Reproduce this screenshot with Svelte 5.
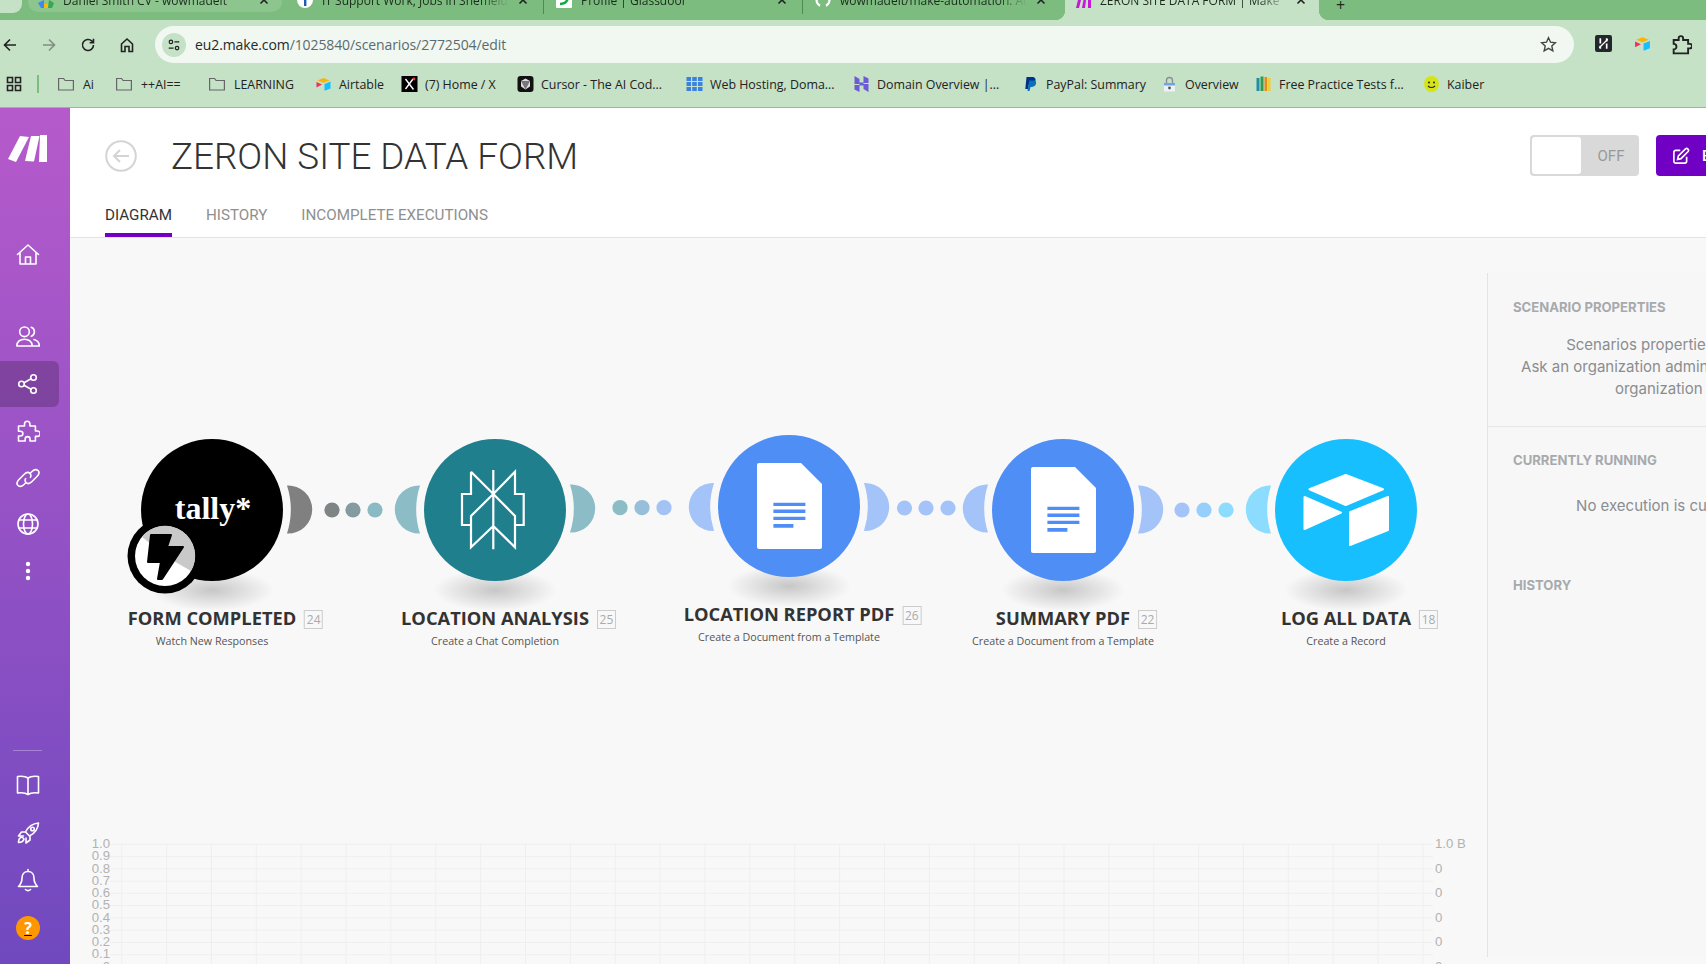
<script>
  const tabs = [
    { title: 'Daniel Smith CV - wowmadeit', icon: 'drive', kind: 'hover' },
    { title: 'IT Support Work, Jobs in Sheffield', icon: 'info', kind: 'sep' },
    { title: 'Profile | Glassdoor', icon: 'glass', kind: 'sep' },
    { title: 'wowmadeit/make-automation: Automa', icon: 'git', kind: '' },
    { title: 'ZERON SITE DATA FORM | Make', icon: 'make', kind: 'active' }
  ];
  const bookmarks = [
    { label: 'Ai', icon: 'folder', w: 58 },
    { label: '++AI==', icon: 'folder', w: 93 },
    { label: 'LEARNING', icon: 'folder', w: 107 },
    { label: 'Airtable', icon: 'airtable', w: 86 },
    { label: '(7) Home / X', icon: 'x', w: 116 },
    { label: 'Cursor - The AI Cod...', icon: 'cursor', w: 169 },
    { label: 'Web Hosting, Doma...', icon: 'grid', w: 167 },
    { label: 'Domain Overview |...', icon: 'hostinger', w: 169 },
    { label: 'PayPal: Summary', icon: 'paypal', w: 139 },
    { label: 'Overview', icon: 'lock', w: 94 },
    { label: 'Free Practice Tests f...', icon: 'books', w: 168 },
    { label: 'Kaiber', icon: 'kaiber', w: 70 }
  ];
  const nodes = [
    { name: 'FORM COMPLETED', sub: 'Watch New Responses', count: 24, cx: 212, cy: 510, color: '#000000', icon: 'tally' },
    { name: 'LOCATION ANALYSIS', sub: 'Create a Chat Completion', count: 25, cx: 495, cy: 510, color: '#207f8d', icon: 'perplexity' },
    { name: 'LOCATION REPORT PDF', sub: 'Create a Document from a Template', count: 26, cx: 789, cy: 506, color: '#4f8ef5', icon: 'doc' },
    { name: 'SUMMARY PDF', sub: 'Create a Document from a Template', count: 22, cx: 1063, cy: 510, color: '#4f8ef5', icon: 'doc' },
    { name: 'LOG ALL DATA', sub: 'Create a Record', count: 18, cx: 1346, cy: 510, color: '#18bfff', icon: 'airtable' }
  ];
  const moons = [
    { cx: 212, cy: 509.5, dir: 1, color: '#808080' },
    { cx: 495, cy: 509.5, dir: -1, color: '#8cbdc6' },
    { cx: 495, cy: 508.5, dir: 1, color: '#8cbdc6' },
    { cx: 789, cy: 507, dir: -1, color: '#a4c4f9' },
    { cx: 789, cy: 507, dir: 1, color: '#a4c4f9' },
    { cx: 1063, cy: 508.5, dir: -1, color: '#a4c4f9' },
    { cx: 1063, cy: 509.5, dir: 1, color: '#a4c4f9' },
    { cx: 1346, cy: 509.5, dir: -1, color: '#8bdcff' }
  ];
  const dots = [
    [332, 510, '#7f8485'], [353, 510, '#849ba0'], [375, 510, '#8abbc4'],
    [620, 507.7, '#8cbdc6'], [642, 507.7, '#98bfd9'], [664, 507.7, '#a2c3f4'],
    [904.5, 508, '#a4c4f9'], [926, 508, '#a4c4f9'], [948, 508, '#a4c4f9'],
    [1182, 510, '#a4c4f9'], [1204, 510, '#97cffc'], [1226, 510, '#8bdcff']
  ];
  function moonPath(m) {
    const x = m.cx + m.dir * 75;
    const s = m.dir > 0 ? 1 : 0;
    const i = m.dir > 0 ? 0 : 1;
    return `M${x} ${m.cy - 24}A24.03 24.03 0 1 ${s} ${x} ${m.cy + 24}A79 79 0 0 ${i} ${x} ${m.cy - 24}Z`;
  }
  const hLines = Array.from({ length: 11 }, (_, i) => 844.3 + i * 12.27);
  const vLines = Array.from({ length: 30 }, (_, i) => 121.7 + i * 44.87);
  const leftLabels = ['1.0', '0.9', '0.8', '0.7', '0.6', '0.5', '0.4', '0.3', '0.2', '0.1', '0'];
  const rightLabels = ['1.0 B', '0', '0', '0', '0', '0'];
</script>

<div class="app">
  <header class="chrome">
    <div class="tabstrip">
      <div class="stub"></div>
      {#each tabs as t}
        <div class="tab {t.kind}">
          <div class="tabrow">
            <svg class="fav" viewBox="0 0 16 16">
              {#if t.icon === 'drive'}
                <path d="M0 11l3 5h3V8z" fill="#4285f4" /><path d="M6 12h4v4H6z" fill="#fbbc05" /><path d="M11 8l5 3-2 5h-4z" fill="#34a853" />
              {:else if t.icon === 'info'}
                <circle cx="8" cy="8" r="8" fill="#fff" /><path d="M7 3h2.4v11H7z" fill="#1b5fb4" />
              {:else if t.icon === 'glass'}
                <rect width="16" height="16" rx="1" fill="#fff" /><path d="M4 12c4 0 7-2 8-6" stroke="#0caa41" stroke-width="2.4" fill="none" />
              {:else if t.icon === 'git'}
                <circle cx="8" cy="8" r="6.5" fill="none" stroke="#fff" stroke-width="2.2" /><path d="M5 13l6 0 0 3-6 0z" fill="#7cbc7f" />
              {:else}
                <path d="M1 16L5 0h3L4 16zM7 16L10 0h2L10 16zM13 0h3v16h-3z" fill="#c516d9" />
              {/if}
            </svg>
            <span class="tabtitle">{t.title}</span>
            <svg class="close" viewBox="0 0 10 10"><path d="M1.5 1.5l7 7M8.5 1.5l-7 7" /></svg>
          </div>
        </div>
      {/each}
      <span class="plus">+</span>
    </div>

    <div class="toolbar">
      <button class="tb" aria-label="Back"><svg viewBox="0 0 16 16"><path d="M14 8H2.5M8 2.5L2.5 8 8 13.5" /></svg></button>
      <button class="tb dim" aria-label="Forward"><svg viewBox="0 0 16 16"><path d="M2 8h11.5M8 2.5L13.5 8 8 13.5" /></svg></button>
      <button class="tb" aria-label="Reload"><svg viewBox="0 0 16 16"><path d="M13.5 8a5.5 5.5 0 1 1-1.6-3.9L13.5 5.7M13.5 1.8v3.9H9.6" /></svg></button>
      <button class="tb" aria-label="Home"><svg viewBox="0 0 16 16"><path d="M2.5 14.5V7L8 2l5.5 5v7.5H10V9.5H6v5z" /></svg></button>
      <div class="omnibox">
        <span class="info"><svg viewBox="0 0 16 16"><circle cx="4.5" cy="4.5" r="2" /><path d="M8.5 4.5h5.5M2 11.5h5.5" /><circle cx="11.5" cy="11.5" r="2" /></svg></span>
        <span class="url"><b>eu2.make.com</b>/1025840/scenarios/2772504/edit</span>
        <svg class="star" viewBox="0 0 16 16"><path d="M8 1.6l1.9 4.2 4.6.5-3.4 3.1 1 4.5L8 11.6l-4.1 2.3 1-4.5L1.5 6.3l4.6-.5z" /></svg>
      </div>
      <div class="exts">
        <span class="ext"><svg viewBox="0 0 16 16"><rect x="0" width="16" height="16" rx="2" fill="#23262b" /><path d="M5 3v5M11 3v3M11 8v5M5 10v3" stroke="#fff" stroke-width="1.6" /><path d="M4 12L12 4" stroke="#fff" stroke-width="1.2" /></svg></span>
        <span class="ext"><svg viewBox="0 0 16 16"><path d="M8 2l6 2.4-6 2.4-6-2.4z" fill="#fcb400" /><path d="M9 8l6-2.4v6.8L9 14.8z" fill="#18bfff" /><path d="M1 6l5.5 2.6L1 11.6z" fill="#f82b60" /></svg></span>
        <span class="ext wide"><svg viewBox="0 0 18 18"><path d="M1.500 4.500h4.500V3a2 2 0 0 1 4 0v1.500h4.500V8H16a2 2 0 0 1 0 4h-1.500v4.500h-13V13a2 2 0 0 0 0-5z" fill="none" stroke="#222" stroke-width="1.700" /></svg></span>
      </div>
    </div>

    <div class="bookmarks">
      <svg class="apps" viewBox="0 0 16 16"><path d="M1.5 1.5h5v5h-5zM9.5 1.5h5v5h-5zM1.5 9.5h5v5h-5zM9.5 9.5h5v5h-5z" /></svg>
      <span class="bsep"></span>
      {#each bookmarks as b}
        <div class="bm" class:isfolder={b.icon === 'folder'} style="width:{b.w}px">
          <svg class="bicon" viewBox="0 0 16 16">
            {#if b.icon === 'folder'}
              <path d="M0.600 2.500h5l1.500 2H15.400v9.500H0.600z" fill="none" stroke="#666" stroke-width="1.200" />
            {:else if b.icon === 'airtable'}
              <path d="M8 2l6 2.4-6 2.4-6-2.4z" fill="#fcb400" /><path d="M9 8l6-2.4v6.8L9 14.8z" fill="#18bfff" /><path d="M1 6l5.5 2.6L1 11.6z" fill="#f82b60" />
            {:else if b.icon === 'x'}
              <rect width="16" height="16" fill="#000" /><path d="M4 3l8 10.5M11.5 3L4 13" stroke="#fff" stroke-width="1.4" /><circle cx="12.5" cy="3" r="1.4" fill="#e33" />
            {:else if b.icon === 'cursor'}
              <rect width="16" height="16" rx="3" fill="#111" /><path d="M3.5 5L8 2.5 12.5 5v5.5L8 13.5 3.5 10.5z" fill="#ddd" /><path d="M3.5 5L12.5 5 8 13.5z" fill="#777" />
            {:else if b.icon === 'grid'}
              <path d="M0 1h4.5v4H0zM5.7 1h4.6v4H5.7zM11.5 1H16v4h-4.5zM0 6h4.5v4H0zM5.7 6h4.6v4H5.7zM11.5 6H16v4h-4.5zM0 11h4.5v4H0zM5.7 11h4.6v4H5.7zM11.5 11H16v4h-4.5z" fill="#3b82e0" />
            {:else if b.icon === 'hostinger'}
              <path d="M1 0l5 3v5H1zM10 8h5v8l-5-3zM10 0l5 2.5V7h-5zM1 9h5v7l-5-2.5zM6 6.5h4v3H6z" fill="#6d5ad6" />
            {:else if b.icon === 'paypal'}
              <path d="M4 1h5.5c3 0 4 2 3.4 4-.6 2.4-2.6 3.4-5 3.4H6.4L5.5 13H2.8z" fill="#003087" /><path d="M6.8 4.5h5.5c1.5 1 1.6 2.4 1 3.8-.7 2-2.4 2.7-4.4 2.7H8L7 15H5z" fill="#0a70ba" />
            {:else if b.icon === 'lock'}
              <path d="M5 7V4.5a3 3 0 0 1 6 0V7" fill="none" stroke="#8a8f96" stroke-width="1.4" /><rect x="2.5" y="7" width="11" height="8.5" fill="#eef2f6" /><path d="M2.5 7h11v2.5h-11z" fill="#6ea5e8" /><circle cx="8" cy="12" r="1.4" fill="#555" />
            {:else if b.icon === 'books'}
              <path d="M1 2h3v13H1z" fill="#1f8fa8" /><path d="M5 0.500h3V15H5z" fill="#2e9d54" /><path d="M9 1h2.500v14H9z" fill="#e58a1f" /><path d="M12 2h3v13h-3z" fill="#efcf2e" />
            {:else}
              <ellipse cx="8" cy="8" rx="7.500" ry="8" fill="#d6e416" /><circle cx="5.500" cy="6.500" r="1" fill="#222" /><circle cx="10.500" cy="6.500" r="1" fill="#222" /><path d="M4.500 10c2 2 5 2 7 0" fill="none" stroke="#222" stroke-width="1.2" />
            {/if}
          </svg>
          <span>{b.label}</span>
        </div>
      {/each}
    </div>
  </header>

  <div class="body">
    <aside class="sidebar">
      <div class="logo">
        <svg viewBox="0 0 70 50"><path d="M20 9l9 1-13 25-8-3zM31 9h8.500L34 34.500 25 34zM40 8h7v27h-8z" fill="#fff" /></svg>
      </div>
      <nav class="nav">
        <a class="item home" href="#a" aria-label="Home"><svg viewBox="0 0 24 24"><path d="M1.500 11.500L12 2l10.500 9.500M4 9.500V21h16V9.500M9.500 21v-7h5v7" /></svg></a>
        <a class="item" href="#a" aria-label="Team"><svg viewBox="0 0 24 24"><circle cx="8.500" cy="6.800" r="4.800" /><path d="M.800 21c0-4.300 3.500-6.800 7.700-6.800s7.700 2.500 7.700 6.800zM15.300 2.300a4.800 4.800 0 0 1 0 9M18 14.500c3 .8 5.300 2.800 5.300 6.500h-7" /></svg></a>
        <a class="item active" href="#a" aria-label="Scenarios"><svg viewBox="0 0 24 24"><circle cx="5.500" cy="12" r="2.800" /><circle cx="17.500" cy="5.500" r="2.800" /><circle cx="17.500" cy="18.500" r="2.800" /><path d="M8 10.700l7-4M8 13.300l7 4" /></svg></a>
        <a class="item" href="#a" aria-label="Apps"><svg viewBox="0 0 24 24"><path d="M2.500 7h6V5a2.700 2.700 0 0 1 5.400 0v2h5.500v5h2a2.700 2.700 0 0 1 0 5.400h-2V22H14v-2a2.400 2.400 0 0 0-4.800 0v2H2.500v-5h2a2.400 2.400 0 0 0 0-4.800h-2z" /></svg></a>
        <a class="item" href="#a" aria-label="Connections"><svg viewBox="0 0 24 24"><path d="M10 16.500l-2 2c-2 2-4.500 2.300-6 1-1.500-1.500-1-4 1-6l5-5c2-2 4.500-2.500 6-1 1 1 1.200 2.400.4 3.800" /><path d="M14 7.500l2-2c2-2 4.500-2.300 6-1 1.500 1.500 1 4-1 6l-5 5c-2 2-4.500 2.500-6 1-1-1-1.200-2.400-.4-3.800" /></svg></a>
        <a class="item" href="#a" aria-label="Web"><svg viewBox="0 0 24 24"><circle cx="12" cy="12" r="10" /><ellipse cx="12" cy="12" rx="4.500" ry="10" /><path d="M3 8h18M3 16h18" /></svg></a>
        <a class="item" href="#a" aria-label="More"><svg viewBox="0 0 24 24"><circle class="solid" cx="12" cy="5" r="2.200" /><circle class="solid" cx="12" cy="12" r="2.200" /><circle class="solid" cx="12" cy="19" r="2.200" /></svg></a>
      </nav>
      <div class="bottom">
        <span class="rule"></span>
        <a class="item" href="#a" aria-label="Docs"><svg viewBox="0 0 24 24"><path d="M12 5c-2-1.500-6-2-10.500-1.500V20c4.500-.5 8.500 0 10.500 1.500 2-1.500 6-2 10.500-1.500V3.500C18 3 14 3.500 12 5zM12 5v16.500" /></svg></a>
        <a class="item" href="#a" aria-label="News"><svg viewBox="0 0 24 24"><path d="M22.500 2c-6 .5-10 3-13 9l4 4c6-3 8.500-7 9-13zM9.500 11H5.500L2.500 15h5M14 15v4l-4 3v-5" /><circle cx="16.500" cy="8" r="1.800" /><path d="M6 16c-2 .5-3.500 2-3.500 5.500C6 21.500 7.500 20 8 18z" /></svg></a>
        <a class="item" href="#a" aria-label="Notifications"><svg viewBox="0 0 24 24"><path d="M12 3.500c-4 0-6 3-6 6.500 0 5-1.500 6.500-3.500 8.500h19C19.500 16.500 18 15 18 10c0-3.500-2-6.500-6-6.500zM12 1.500v2M9.500 21.500c1.500 1.300 3.500 1.300 5 0" /></svg></a>
        <a class="item" href="#a" aria-label="Help"><span class="help">?</span></a>
      </div>
    </aside>

    <main class="main">
      <section class="head">
        <div class="headrow">
          <svg class="backc" viewBox="0 0 32 32"><circle cx="16" cy="16" r="14.800" /><path d="M24 16H9M15 10l-6 6 6 6" /></svg>
          <h1>ZERON SITE DATA FORM</h1>
          <div class="actions">
            <div class="toggle"><span class="knob"></span><span class="off">OFF</span></div>
            <button class="edit"><svg viewBox="0 0 24 24"><path d="M11 4.500H5a2.500 2.500 0 0 0-2.500 2.500v12A2.500 2.500 0 0 0 5 21.500h12a2.500 2.500 0 0 0 2.500-2.500v-6M18 2.500a2.500 2.500 0 0 1 3.500 3.500L12 15.500l-4.500 1 1-4.500z" /></svg>Edit</button>
          </div>
        </div>
        <div class="subtabs">
          <span class="st on">DIAGRAM</span>
          <span class="st">HISTORY</span>
          <span class="st">INCOMPLETE EXECUTIONS</span>
        </div>
      </section>

      <div class="work">
        <div class="canvas">
          <svg class="links" viewBox="70 238 1417 726">
            {#each moons as m}<path d={moonPath(m)} fill={m.color} />{/each}
            {#each dots as d}<circle cx={d[0]} cy={d[1]} r="7.600" fill={d[2]} />{/each}
            <g class="grid">
              {#each hLines as y}<line x1="110" x2="1433" y1={y} y2={y} />{/each}
              {#each vLines as x}<line x1={x} x2={x} y1="844.300" y2="970" />{/each}
            </g>
            {#each leftLabels as l, i}<text class="tick" x="110" y={848 + i * 12.27} text-anchor="end">{l}</text>{/each}
            {#each rightLabels as l, i}<text class="tick" x="1435" y={848 + i * 24.55}>{l}</text>{/each}
          </svg>

          {#each nodes as n}
            <div class="node" style="left:{n.cx - 141}px;top:{n.cy - 309}px">
              <div class="shadow"></div>
              <div class="disc" style="background:{n.color}">
                {#if n.icon === 'tally'}
                  <span class="tally">tally*</span>
                {:else if n.icon === 'perplexity'}
                  <svg viewBox="0 0 142 142" class="logo-svg">
                    <path class="pp" d="M69.300 31v79.300M47 32.700L69.300 55 91 32.700V55H99.700V86H91M47 32.700V55H38V86H47M69.300 55L47 77V108.300L69.300 87 91 108.300V77z" />
                  </svg>
                {:else if n.icon === 'doc'}
                  <svg viewBox="0 0 142 142" class="logo-svg">
                    <path d="M39 30a2 2 0 0 1 2-2h42l21 21v63a2 2 0 0 1-2 2H41a2 2 0 0 1-2-2z" fill="#fff" />
                    <path d="M55.400 67.700h32v3.400h-32zM55.400 74.500h32v3.400h-32zM55.400 81.700h32v3.400h-32zM55.400 89h20v3.700h-20z" fill={n.color} />
                  </svg>
                {:else}
                  <svg viewBox="0 0 142 142" class="logo-svg">
                    <path class="air" d="M70.700 36L34.500 50.300 70.700 66 108 50.300zM29.500 58L66 73.700 29.500 90zM113 58L75 73.200V106L113 91z" />
                  </svg>
                {/if}
              </div>
              {#if n.icon === 'tally'}
                <svg class="trigger" viewBox="0 0 76 76">
                  <circle cx="38" cy="38" r="37.500" fill="#000" />
                  <circle cx="38" cy="38" r="30" fill="#fff" />
                  <path d="M38 38L15 18.700A30 30 0 0 1 64 53z" fill="#c9c9c9" />
                  <path d="M24 17h20l-4 12h16L35 61h-4l3-17H21z" fill="#000" stroke="#000" stroke-width="2" stroke-linejoin="round" />
                </svg>
              {/if}
              <div class="label">
                <div class="title">{n.name}<span class="count">{n.count}</span></div>
                <div class="sub">{n.sub}</div>
              </div>
            </div>
          {/each}
        </div>

        <aside class="panel">
          <div class="sec first">
            <h2>SCENARIO PROPERTIES</h2>
            <p>Scenarios properties are not available<br />Ask an organization admin to upgrade your plan or<br />organization to enable it</p>
          </div>
          <div class="sec second">
            <h2>CURRENTLY RUNNING</h2>
            <p>No execution is currently running...</p>
            <h2 class="hist">HISTORY</h2>
          </div>
        </aside>
      </div>
    </main>
  </div>
</div>

<style>
  :global(body) { margin: 0; overflow: hidden; background: #f8f8f8; }
  .app { width: 1706px; height: 964px; display: flex; flex-direction: column; overflow: hidden; font-family: "Open Sans", "Noto Sans", sans-serif; }
  a { color: inherit; }
  button { border: 0; background: none; padding: 0; font: inherit; }

  .chrome { height: 108px; flex: none; background: #c5e1c6; border-bottom: 1px solid #9db59f; box-sizing: border-box; }
  .tabstrip { height: 20px; background: #7cbc7f; display: flex; gap: 5px; position: relative; }
  .stub { width: 22px; height: 13px; background: #c5e1c6; border-radius: 0 0 9px 0; margin-right: 1px; }
  .tab { width: 254px; height: 20px; flex: none; position: relative; }
  .tab.hover { height: 12px; background: #8cc58e; border-radius: 0 0 10px 10px; overflow: hidden; }
  .tab.active { background: #c5e1c6; margin-left: 1px; }
  .tab.active::before, .tab.active::after { content: ""; position: absolute; bottom: 0; width: 10px; height: 10px; }
  .tab.active::before { left: -10px; background: radial-gradient(circle at 0 0, transparent 10px, #c5e1c6 10.5px); }
  .tab.active::after { right: -10px; background: radial-gradient(circle at 100% 0, transparent 10px, #c5e1c6 10.5px); }
  .tab.sep::after { content: ""; position: absolute; right: -3px; top: 0; width: 1px; height: 14px; background: #4f8a52; }
  .tabrow { display: flex; align-items: center; height: 16px; margin-top: -8px; padding: 0 13px 0 10px; gap: 9px; font-size: 12px; color: #1c2b1d; white-space: nowrap; overflow: hidden; }
  .fav { width: 16px; height: 16px; flex: none; }
  .tabtitle { flex: 1; overflow: hidden; min-width: 0; -webkit-mask-image: linear-gradient(90deg, #000 85%, transparent); mask-image: linear-gradient(90deg, #000 85%, transparent); }
  .close { width: 10px; height: 10px; flex: none; }
  .close path { stroke: #222; stroke-width: 1.6; fill: none; }
  .plus { font-size: 16px; line-height: 10px; height: 10px; color: #1c2b1d; margin-left: 12px; overflow: hidden; }

  .toolbar { height: 49px; display: flex; align-items: center; box-sizing: border-box; margin-left: -10px; }
  .tb { width: 39px; height: 37px; display: flex; align-items: center; justify-content: center; flex: none; }
  .tb svg { width: 16px; height: 16px; fill: none; stroke: #222; stroke-width: 1.6; }
  .tb.dim svg { stroke: #7f9180; }
  .omnibox { margin-left: 9px; width: 1419px; height: 37px; flex: none; background: #f1f8f2; border-radius: 19px; display: flex; align-items: center; padding: 0 17px 0 7px; box-sizing: border-box; }
  .info { width: 24px; height: 24px; border-radius: 50%; background: #c5e1c6; display: flex; align-items: center; justify-content: center; flex: none; }
  .info svg { width: 14px; height: 14px; fill: none; stroke: #222; stroke-width: 1.4; }
  .url { margin-left: 9px; font-size: 14px; color: #5a6b70; flex: 1; letter-spacing: -0.1px; }
  .url b { font-weight: 400; color: #1f2a2c; }
  .star { width: 17px; height: 17px; fill: none; stroke: #444; stroke-width: 1.3; }
  .exts { display: flex; margin-left: 10px; flex: none; }
  .ext { width: 39px; display: flex; justify-content: center; }
  .ext svg { width: 17px; height: 17px; }
  .ext.wide svg { width: 20px; height: 20px; }

  .bookmarks { height: 30px; display: flex; align-items: center; font-size: 12.400px; color: #222; }
  .apps { width: 16px; height: 16px; margin-left: 6px; fill: none; stroke: #222; stroke-width: 1.6; flex: none; }
  .bsep { width: 2px; height: 18px; background: #7cbc7f; margin: 0 18px 0 15px; flex: none; }
  .bm { display: flex; align-items: center; gap: 7px; flex: none; white-space: nowrap; }
  .bm.isfolder { gap: 8px; }
  .bm.isfolder .bicon { width: 18px; }
  .bicon { width: 17px; height: 16px; flex: none; }

  .body { flex: 1; display: flex; min-height: 0; }
  .sidebar { width: 70px; flex: none; background: linear-gradient(180deg, #b65acb, #7049bf); display: flex; flex-direction: column; padding-bottom: 12.500px; box-sizing: border-box; }
  .logo { height: 124px; padding-top: 19px; box-sizing: border-box; flex: none; }
  .logo svg { width: 70px; height: 50px; display: block; }
  .nav { display: flex; flex-direction: column; }
  .item { width: 59px; height: 46.800px; flex: none; display: flex; align-items: center; justify-content: center; box-sizing: border-box; border-radius: 0 6px 6px 0; }
  .item svg { width: 24px; height: 24px; fill: none; stroke: #fff; stroke-width: 1.600; stroke-linejoin: round; stroke-linecap: round; margin-left: -3px; }
  .item .solid { fill: #fff; stroke: none; }
  .item.home { margin-bottom: 35px; }
  .item.active { background: rgba(0, 0, 0, .2); }
  .bottom { margin-top: auto; display: flex; flex-direction: column; }
  .bottom .item { height: 47.500px; }
  .rule { width: 29px; height: 1px; background: rgba(255, 255, 255, .3); margin: 0 0 11px 13px; }
  .help { width: 24px; height: 24px; margin-left: -3px; border-radius: 50%; background: #ff9800; color: #fff; font: 700 16px/24px "Open Sans", sans-serif; text-align: center; }

  .main { width: 1636px; flex: none; display: flex; flex-direction: column; min-width: 0; overflow: hidden; }
  .head { height: 130px; flex: none; background: #fff; border-bottom: 1px solid #e3e3e3; box-sizing: border-box; display: flex; flex-direction: column; padding-left: 35px; }
  .headrow { display: flex; align-items: center; height: 41px; margin-top: 27px; }
  .backc { width: 32px; height: 32px; flex: none; fill: none; stroke: #d4d4d4; stroke-width: 2; }
  h1 { margin: 2px 0 0 34px; font: 300 36.800px/41px Roboto, sans-serif; color: #333; white-space: nowrap; }
  .actions { margin-left: auto; display: flex; gap: 17px; margin-right: -50px; flex: none; }
  .toggle { width: 109px; height: 41px; background: #d9d9d9; border-radius: 4px; display: flex; align-items: center; box-sizing: border-box; padding: 2px; }
  .knob { width: 49px; height: 37px; background: #fff; border-radius: 3px; }
  .off { flex: 1; text-align: center; font: 400 15px Roboto, sans-serif; color: #999; padding-left: 4px; }
  .edit { width: 100px; height: 41px; background: #6f00c4; color: #fff; border-radius: 4px; display: flex; align-items: center; gap: 12px; padding-left: 16px; font: 500 15px Roboto, sans-serif; box-sizing: border-box; }
  .edit svg { width: 18px; height: 18px; fill: none; stroke: #fff; stroke-width: 2.2; flex: none; }
  .subtabs { margin-top: auto; display: flex; gap: 34px; }
  .st { font: 400 15.200px/20px Roboto, sans-serif; color: #8f8f8f; padding-bottom: 8px; border-bottom: 4px solid transparent; }
  .st.on { color: #333; border-bottom-color: #6f00c4; }

  .work { flex: 1; display: flex; min-height: 0; background: #f8f8f8; }
  .canvas { width: 1417px; flex: none; position: relative; }
  .links { position: absolute; inset: 0; width: 1417px; height: 726px; }
  .grid line { stroke: #efefef; stroke-width: 1; }
  .tick { font: 13.200px "Liberation Sans", Arial, sans-serif; fill: #b2b2b2; }
  .node { position: absolute; width: 142px; height: 142px; }
  .disc { width: 142px; height: 142px; border-radius: 50%; position: relative; display: flex; align-items: center; justify-content: center; }
  .shadow { position: absolute; left: 9px; top: 130px; width: 124px; height: 42px; background: radial-gradient(closest-side, rgba(0, 0, 0, .2), rgba(0, 0, 0, 0)); }
  .tally { font: 700 32px/1 "Liberation Serif", serif; color: #fff; margin-top: -4px; margin-left: 2px; }
  .logo-svg { width: 142px; height: 142px; display: block; }
  .pp { fill: none; stroke: #fff; stroke-width: 2.200; }
  .air { fill: #fff; stroke: #fff; stroke-width: 2; stroke-linejoin: round; }
  .trigger { position: absolute; left: -14.500px; top: 79px; width: 76px; height: 76px; }
  .label { position: absolute; left: 50%; top: 166px; transform: translateX(-50%); text-align: center; white-space: nowrap; }
  .title { position: relative; display: inline-block; font: 700 18.300px/26px "Open Sans", sans-serif; color: #333; }
  .count { position: absolute; left: calc(100% + 8px); top: 5px; width: 17px; height: 17px; border: 1px solid #ccc; font: 400 12px/17px "Open Sans", sans-serif; color: #aaa; text-align: center; }
  .sub { font: 400 10.700px/16px "Open Sans", sans-serif; color: #555; margin-top: 2px; }

  .panel { width: 426px; flex: none; margin: 35px 0 7px; border-left: 1px solid #e4e4e4; background: #f7f7f7; box-sizing: border-box; font-family: Inter, sans-serif; }
  .sec { padding: 0 26px 0 25px; }
  .first { padding-top: 24px; padding-bottom: 26px; border-bottom: 1px solid #e6e6e6; }
  .second { padding-top: 23px; }
  h2 { margin: 0; font: 700 13.100px/20px Inter, sans-serif; color: #a7aaad; }
  p { margin: 17px 0 0; font: 400 15px/22px Inter, sans-serif; color: #8a8d90; text-align: center; white-space: nowrap; }
  .second p { margin-top: 25px; }
  .hist { margin-top: 58px; }
</style>
